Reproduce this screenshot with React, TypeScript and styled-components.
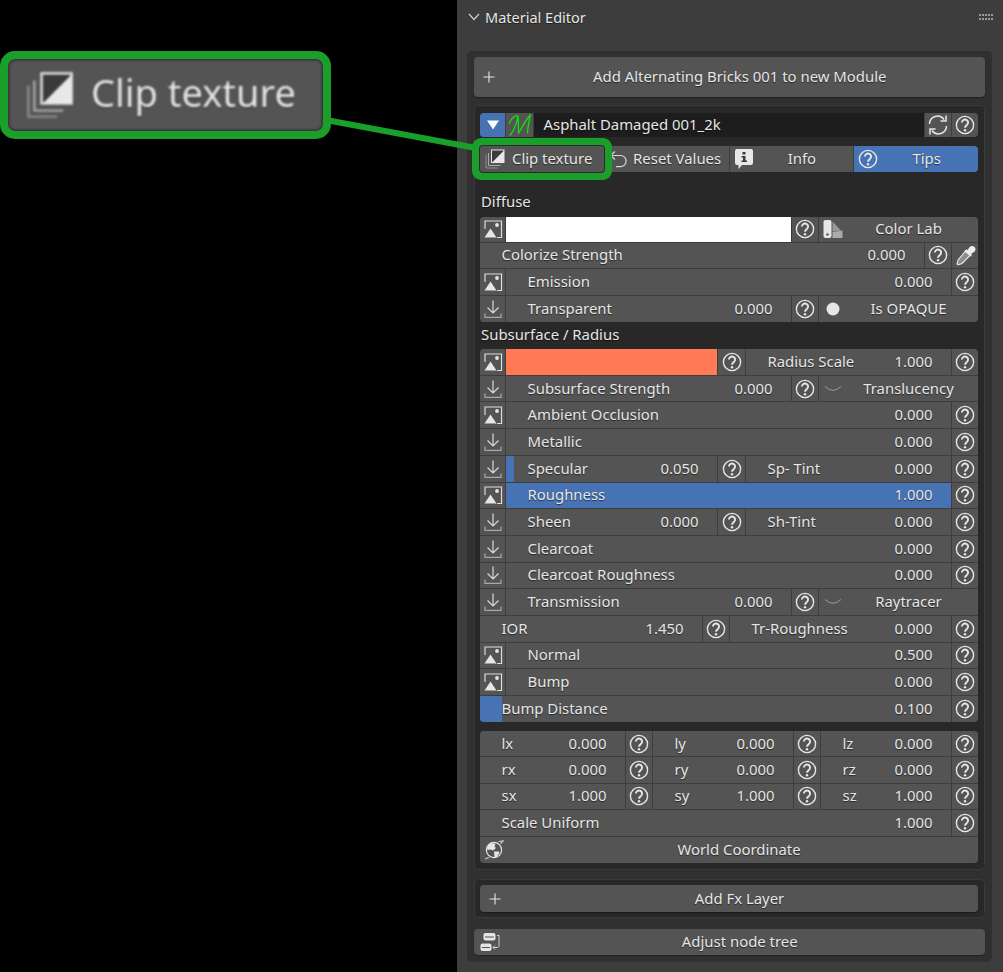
import React, { FC } from "react";
import styled, { createGlobalStyle } from "styled-components";

const GREEN = "#1a9f2b";
const TEXT = "#e6e6e6";
const WIDGET = "#545454";
const LINE = "#3d3d3d";
const BLUE = "#4772b3";

const GlobalStyle = createGlobalStyle`
  html, body { margin: 0; padding: 0; background: #000; }
  #root { width: 1003px; height: 972px; overflow: hidden; }
`;

const Page = styled.div`
  position: relative;
  display: flex;
  width: 1003px;
  height: 972px;
  background: #000;
  font-family: "Noto Sans", "DejaVu Sans", sans-serif;
  font-size: 14.9px;
  color: ${TEXT};
  text-shadow: 0 1px 1px rgba(0, 0, 0, 0.55);
`;

const LeftPane = styled.div`
  width: 457px;
  flex: none;
  padding-top: 51px;
  box-sizing: border-box;
`;

const CalloutRing = styled.div`
  width: 331px;
  height: 88px;
  box-sizing: border-box;
  border: 8px solid ${GREEN};
  border-radius: 15px;
  background: ${WIDGET};
  box-shadow: inset 0 0 3px 1px #2a2a2a;
`;

const CalloutContent = styled.div`
  height: 100%;
  display: flex;
  align-items: center;
  padding: 0 0 7px 18px;
  box-sizing: border-box;
  gap: 17px;
  filter: blur(0.8px);
  font-size: 38px;
  svg { width: 48px; height: 48px; margin-top: 7px; }
`;

const ConnectorSvg = styled.svg`
  position: absolute;
  left: 320px;
  top: 112px;
  z-index: 3;
`;

const Panel = styled.div`
  flex: 1;
  background: #3d3d3d;
  display: flex;
  flex-direction: column;
  padding-left: 10px;
`;

const PanelHeader = styled.div`
  height: 51px;
  width: 526px;
  display: flex;
  align-items: center;
  gap: 4px;
  padding-bottom: 17px;
  box-sizing: border-box;
`;

const PanelTitle = styled.span`
  flex: 1;
  font-size: 14.5px;
`;

const OuterBox = styled.div`
  width: 524.5px;
  height: 910.5px;
  box-sizing: border-box;
  background: #303030;
  border-radius: 5px;
  padding: 6px 6.5px;
  display: flex;
  flex-direction: column;
`;

const BigButton = styled.div<{ $h: number; $top?: number; $iconLeft?: number }>`
  position: relative;
  height: ${(p) => p.$h}px;
  margin-top: ${(p) => p.$top || 0}px;
  flex: none;
  box-sizing: border-box;
  padding: 0 0 2px 21px;
  background: ${WIDGET};
  border-radius: 4px;
  display: flex;
  align-items: center;
  justify-content: center;
  box-shadow: 0 1px 1px rgba(0, 0, 0, 0.35);
  svg { position: absolute; left: ${(p) => p.$iconLeft ?? 8}px; margin-top: 2px; }
`;

const SubBox = styled.div<{ $top: number }>`
  margin-top: ${(p) => p.$top}px;
  background: #282828;
  border: 1px solid #3a3a3a;
  border-radius: 5px;
  padding: 6.5px 6px 6.5px 5.5px;
  display: flex;
  flex-direction: column;
`;

const FxBox = styled(SubBox)`
  padding-top: 5px;
  padding-bottom: 5px;
`;

const HeadRow = styled.div`
  height: 24.5px;
  display: flex;
  gap: 1px;
  background: ${LINE};
  border-radius: 4px;
`;

const HeadButton = styled.div<{ $w: number; $blue?: boolean }>`
  width: ${(p) => p.$w}px;
  flex: none;
  display: flex;
  align-items: center;
  justify-content: center;
  background: ${(p) => (p.$blue ? BLUE : WIDGET)};
  &:first-child { border-radius: 4px 0 0 4px; }
  &:last-child { border-radius: 0 4px 4px 0; }
`;

const NameField = styled.div`
  flex: 1;
  background: #1d1d1d;
  display: flex;
  align-items: center;
  padding: 0 0 2px 9.5px;
`;

const TabRow = styled.div`
  margin-top: 9px;
  height: 26px;
  display: grid;
  grid-template-columns: repeat(4, 1fr);
  gap: 1px;
  background: ${LINE};
  border-radius: 4px;
`;

const Tab = styled.div<{ $blue?: boolean }>`
  display: flex;
  align-items: center;
  padding: 0 6px 0 4px;
  gap: 3px;
  background: ${(p) => (p.$blue ? BLUE : WIDGET)};
  &:last-child { border-radius: 0 4px 4px 0; }
`;

const TabLabel = styled.span`
  flex: 1;
  text-align: center;
  white-space: nowrap;
  margin-top: -2px;
`;

const ClipTab = styled.div`
  position: relative;
  z-index: 2;
  display: flex;
  align-items: center;
  gap: 7px;
  padding-left: 5px;
  background: ${WIDGET};
  border-radius: 3px;
  white-space: nowrap;
  box-shadow: 0 0 0 1px #2b2b2b, 0 0 0 8px ${GREEN};
`;

const ClipLabel = styled.span`
  margin-top: -2px;
`;

const SectionLabel = styled.div<{ $top?: number }>`
  height: 25px;
  margin-top: ${(p) => p.$top || 0}px;
  margin-bottom: 2px;
  padding-left: 1px;
  line-height: 25px;
`;

const Group = styled.div<{ $top?: number }>`
  margin-top: ${(p) => p.$top || 0}px;
  display: flex;
  flex-direction: column;
  gap: 1px;
  background: ${LINE};
  border-radius: 4px;
  overflow: hidden;
`;

const Row = styled.div<{ $cols: string; $h?: number }>`
  display: grid;
  grid-template-columns: ${(p) => p.$cols};
  gap: 1px;
  height: ${(p) => p.$h || 25.7}px;
`;

const IconCell = styled.div`
  background: ${WIDGET};
  display: flex;
  align-items: center;
  justify-content: center;
`;

const Field = styled.div<{ $fill?: number }>`
  display: flex;
  align-items: center;
  justify-content: space-between;
  padding: 0 18.5px 2px 21.5px;
  min-width: 0;
  white-space: nowrap;
  background: ${(p) =>
    p.$fill
      ? `linear-gradient(90deg, ${BLUE} ${p.$fill}px, ${WIDGET} ${p.$fill}px)`
      : WIDGET};
`;

const Swatch = styled.div<{ $color: string }>`
  background: ${(p) => p.$color};
`;

const Action = styled.div`
  background: ${WIDGET};
  display: flex;
  align-items: center;
  padding: 0 4px;
  min-width: 0;
`;

const ActionIcon = styled.span`
  width: 20px;
  flex: none;
  display: flex;
  align-items: center;
  justify-content: center;
`;

const ActionLabel = styled.span`
  flex: 1;
  text-align: center;
  white-space: nowrap;
  margin-top: -2px;
`;

const Help: FC<{ size?: number }> = ({ size = 20 }) => (
  <svg width={size} height={size} viewBox="0 0 20 20" fill="none" stroke={TEXT}>
    <circle cx="10" cy="10" r="8.6" strokeWidth="1.4" />
    <path
      d="M6.9 7.6a3.1 3.1 0 1 1 4.9 2.5c-1.1.8-1.8 1.3-1.8 2.6"
      strokeWidth="1.9"
    />
    <circle cx="10" cy="15.2" r="1.2" fill={TEXT} stroke="none" />
  </svg>
);

const ImageIcon: FC = () => (
  <svg width="20" height="20" viewBox="0 0 20 20" fill="none">
    <path d="M5 2H18.5V18.5H14M2 10V2H5" stroke="#dcdcdc" strokeWidth="1.2" />
    <path d="M1.5 18.5L7.5 9.5L13.5 18.5Z" fill="#e6e6e6" />
    <circle cx="14" cy="6" r="1.9" fill="#e6e6e6" />
  </svg>
);

const ImportIcon: FC = () => (
  <svg width="20" height="20" viewBox="0 0 20 20" fill="none" stroke="#d8d8d8" strokeWidth="1.2">
    <path d="M10 1.5V13.5M4.5 8.5L10 14L15.5 8.5" />
    <path d="M2 14.5V18.4H18V14.5" stroke="#a8a8a8" />
  </svg>
);

const RefreshIcon: FC = () => (
  <svg width="22" height="22" viewBox="0 0 22 22" fill="none" stroke={TEXT} strokeWidth="1.5">
    <path d="M2.5 10A8 8 0 0 1 17 5.5M19 1.5V7H13.5" />
    <path d="M19.5 12A8 8 0 0 1 5 16.5M3 20.5V15H8.5" />
  </svg>
);

const InfoIcon: FC = () => (
  <svg width="20" height="22" viewBox="0 0 20 22">
    <path
      d="M3 1H17A2 2 0 0 1 19 3V15A2 2 0 0 1 17 17H8L4.5 21V17H3A2 2 0 0 1 1 15V3A2 2 0 0 1 3 1Z"
      fill="#e8e8e8"
    />
    <path d="M8.5 4H11.5V6.5H8.5ZM7.5 8H11.5V12.5H13V14H7.5V12.5H9V9.5H7.5Z" fill="#3a3a3a" />
  </svg>
);

const ClipIcon: FC = () => (
  <svg width="20" height="20" viewBox="0 0 20 20" fill="none">
    <path d="M1 6V19H13" stroke="#8d8d8d" strokeWidth="1" />
    <path d="M3.5 4V16.5H15.5" stroke="#a8a8a8" strokeWidth="1" />
    <rect x="6.5" y="1" width="12.5" height="12.5" fill="#3a3a3a" stroke="#e6e6e6" strokeWidth="1" />
    <path d="M19 1.5V13.5H7Z" fill="#e8e8e8" />
  </svg>
);

const ResetIcon: FC = () => (
  <svg width="20" height="20" viewBox="0 0 20 20" fill="none" stroke="#d8d8d8" strokeWidth="1.2">
    <path d="M6 2.5L1.5 6.5L6 10.5" />
    <path d="M2 6.5H11.5A5.6 5.6 0 0 1 11.5 17.7H7" />
  </svg>
);

const PaletteIcon: FC = () => (
  <svg width="20" height="20" viewBox="0 0 20 20">
    <path d="M9.5 2.5L18 11.5L9.5 12.5Z" fill="#9a9a9a" />
    <path d="M9.5 13L19.5 11.5V19H9.5Z" fill="#ababab" />
    <rect x="0.5" y="1" width="8" height="18" rx="2" fill="#e6e6e6" />
    <circle cx="4.5" cy="15.5" r="1.2" fill="#545454" />
  </svg>
);

const DropperIcon: FC = () => (
  <svg width="21" height="21" viewBox="0 0 21 21" fill="none">
    <path d="M11.5 5L16 9.5L7 18.5L3 19.8L2 18.8L3.2 14.8Z" fill="#8c8c8c" stroke="#e6e6e6" strokeWidth="1.1" />
    <path d="M10 5L12.2 5.6L14.3 2.4C16 .6 18 .6 19.6 2C21 3.6 20.7 5.6 19 7L15.8 8.9L16.8 11L15.5 11.5L9.3 6.2Z" fill="#ececec" />
  </svg>
);

const GlobeIcon: FC = () => (
  <svg width="20" height="20" viewBox="0 0 20 20" fill="none">
    <circle cx="10" cy="10" r="7.6" stroke="#e6e6e6" strokeWidth="1.2" />
    <path
      d="M5 4.5C7 3 10 3 11.5 4L10.5 6.5L12 8L9 10.5L6.5 9.5L3.5 10C3 8 3.5 6 5 4.5ZM10 11.5L15 11.5L15.5 13L12.5 17L10.5 17Z"
      fill="#e6e6e6"
    />
    <path d="M14.5 1.5L19 1L16.5 4M1 19L5 17.5" stroke="#cfcfcf" strokeWidth="1.1" />
  </svg>
);

const NodeIcon: FC = () => (
  <svg width="20" height="20" viewBox="0 0 20 20" fill="none">
    <rect x="3.5" y="1" width="12" height="7.5" rx="2" fill="#e6e6e6" />
    <rect x="0.5" y="11.5" width="11" height="7.5" rx="2" fill="#e6e6e6" />
    <path d="M5 5H14" stroke="#545454" strokeWidth="1" />
    <path d="M2 15.5H10" stroke="#545454" strokeWidth="1" />
    <path d="M17 3.5H19V13.5C19 15 18 15.5 17 15.5H13M15 13.5L13 15.5L15 17.5" stroke="#d0d0d0" strokeWidth="1" />
  </svg>
);

const PlusIcon: FC = () => (
  <svg width="14" height="14" viewBox="0 0 14 14" stroke={TEXT} strokeWidth="1.1">
    <path d="M7 1.5V12.5M1.5 7H12.5" />
  </svg>
);

const ArcIcon: FC = () => (
  <svg width="18" height="10" viewBox="0 0 18 10" fill="none" stroke="#9a9a9a" strokeWidth="1">
    <path d="M1 2.5Q9 10 17 2.5" />
  </svg>
);

const DotIcon: FC = () => (
  <svg width="14" height="14" viewBox="0 0 14 14">
    <circle cx="7" cy="7" r="6.5" fill="#e6e6e6" />
  </svg>
);

const ChevronIcon: FC = () => (
  <svg width="14" height="10" viewBox="0 0 14 10" fill="none" stroke="#cfcfcf" strokeWidth="1.2">
    <path d="M2 2L7 7.5L12 2" />
  </svg>
);

const GripIcon: FC = () => (
  <svg width="14" height="6" viewBox="0 0 14 6" fill="#9a9a9a">
    {[0, 3, 6, 9, 12].map((x) => (
      <React.Fragment key={x}>
        <rect x={x} y="0" width="2" height="2" />
        <rect x={x} y="4" width="2" height="2" />
      </React.Fragment>
    ))}
  </svg>
);

const MaterialLogo: FC = () => (
  <svg width="27" height="24" viewBox="0 0 27 24" fill="none" stroke="#10e010" strokeWidth="1.3">
    <path d="M4 22.5C8 17 11 9 12 3C12.5 9 12.5 15 12.5 20.5C16 14 20 7 24.5 1.5C23 8 21.5 15 21.5 20.5" />
    <path d="M3.3 11C4.5 6 8 2.5 12 3" />
  </svg>
);

const Triangle: FC = () => (
  <svg width="12" height="10" viewBox="0 0 12 10">
    <path d="M0 .5H12L6 9.5Z" fill="#fff" />
  </svg>
);

const HelpCell: FC = () => (
  <IconCell>
    <Help />
  </IconCell>
);

const ICONS: Record<string, FC> = { image: ImageIcon, import: ImportIcon };

const ROWS = {
  wide: "25px 1fr 26px",
  split: "25px 285px 26px 1fr",
  slider: "25px 211px 27px 1fr 26px",
  ior: "1fr 26px 221px 26px",
  plain: "1fr 26px",
  xyz: "145px 26px 140px 26px 1fr 26px",
};

interface IWideRow {
  icon: string;
  label: string;
  value: string;
}

const WideRow: FC<IWideRow> = ({ icon, label, value }) => {
  const Icon = ICONS[icon];
  return (
    <Row $cols={ROWS.wide}>
      <IconCell>
        <Icon />
      </IconCell>
      <Field>
        <span>{label}</span>
        <span>{value}</span>
      </Field>
      <HelpCell />
    </Row>
  );
};

interface ISplitRow {
  label: string;
  value: string;
  action: string;
  actionIcon: React.ReactNode;
}

const SplitRow: FC<ISplitRow> = ({ label, value, action, actionIcon }) => (
  <Row $cols={ROWS.split}>
    <IconCell>
      <ImportIcon />
    </IconCell>
    <Field>
      <span>{label}</span>
      <span>{value}</span>
    </Field>
    <HelpCell />
    <Action>
      <ActionIcon>{actionIcon}</ActionIcon>
      <ActionLabel>{action}</ActionLabel>
    </Action>
  </Row>
);

interface ISliderRow {
  label: string;
  value: string;
  fill?: number;
  sub: string;
  subValue: string;
}

const SliderRow: FC<ISliderRow> = ({ label, value, fill, sub, subValue }) => (
  <Row $cols={ROWS.slider}>
    <IconCell>
      <ImportIcon />
    </IconCell>
    <Field $fill={fill}>
      <span>{label}</span>
      <span>{value}</span>
    </Field>
    <HelpCell />
    <Field>
      <span>{sub}</span>
      <span>{subValue}</span>
    </Field>
    <HelpCell />
  </Row>
);

const XYZ_ROWS = [
  [["lx", "0.000"], ["ly", "0.000"], ["lz", "0.000"]],
  [["rx", "0.000"], ["ry", "0.000"], ["rz", "0.000"]],
  [["sx", "1.000"], ["sy", "1.000"], ["sz", "1.000"]],
];

const App: FC = () => {
  return (
    <Page>
      <GlobalStyle />
      <LeftPane>
        <CalloutRing>
          <CalloutContent>
            <ClipIcon />
            <span>Clip texture</span>
          </CalloutContent>
        </CalloutRing>
      </LeftPane>
      <ConnectorSvg width="160" height="44" viewBox="0 0 160 44">
        <path d="M6 8L156 36" stroke={GREEN} strokeWidth="6" />
      </ConnectorSvg>

      <Panel>
        <PanelHeader>
          <ChevronIcon />
          <PanelTitle>Material Editor</PanelTitle>
          <GripIcon />
        </PanelHeader>
        <OuterBox>
          <BigButton $h={39.5}>
            <PlusIcon />
            Add Alternating Bricks 001 to new Module
          </BigButton>

          <SubBox $top={8.5}>
            <HeadRow>
              <HeadButton $w={25} $blue>
                <Triangle />
              </HeadButton>
              <HeadButton $w={27}>
                <MaterialLogo />
              </HeadButton>
              <NameField>Asphalt Damaged 001_2k</NameField>
              <HeadButton $w={26}>
                <RefreshIcon />
              </HeadButton>
              <HeadButton $w={26}>
                <Help />
              </HeadButton>
            </HeadRow>

            <TabRow>
              <ClipTab>
                <ClipIcon />
                <ClipLabel>Clip texture</ClipLabel>
              </ClipTab>
              <Tab>
                <ResetIcon />
                <TabLabel>Reset Values</TabLabel>
              </Tab>
              <Tab>
                <InfoIcon />
                <TabLabel>Info</TabLabel>
              </Tab>
              <Tab $blue>
                <Help />
                <TabLabel>Tips</TabLabel>
              </Tab>
            </TabRow>

            <SectionLabel $top={16.5}>Diffuse</SectionLabel>
            <Group $top={1}>
              <Row $cols={ROWS.split} $h={25}>
                <IconCell>
                  <ImageIcon />
                </IconCell>
                <Swatch $color="#ffffff" />
                <HelpCell />
                <Action>
                  <ActionIcon>
                    <PaletteIcon />
                  </ActionIcon>
                  <ActionLabel>Color Lab</ActionLabel>
                </Action>
              </Row>
              <Row $cols="1fr 26px 26px">
                <Field>
                  <span>Colorize Strength</span>
                  <span>0.000</span>
                </Field>
                <HelpCell />
                <IconCell>
                  <DropperIcon />
                </IconCell>
              </Row>
              <WideRow icon="image" label="Emission" value="0.000" />
              <SplitRow label="Transparent" value="0.000" action="Is OPAQUE" actionIcon={<DotIcon />} />
            </Group>

            <SectionLabel>Subsurface / Radius</SectionLabel>
            <Group $top={0.5}>
              <Row $cols={ROWS.slider}>
                <IconCell>
                  <ImageIcon />
                </IconCell>
                <Swatch $color="#ff7a55" />
                <HelpCell />
                <Field>
                  <span>Radius Scale</span>
                  <span>1.000</span>
                </Field>
                <HelpCell />
              </Row>
              <SplitRow label="Subsurface Strength" value="0.000" action="Translucency" actionIcon={<ArcIcon />} />
              <WideRow icon="image" label="Ambient Occlusion" value="0.000" />
              <WideRow icon="import" label="Metallic" value="0.000" />
              <SliderRow label="Specular" value="0.050" fill={8} sub="Sp- Tint" subValue="0.000" />
              <Row $cols={ROWS.wide}>
                <IconCell>
                  <ImageIcon />
                </IconCell>
                <Field $fill={446}>
                  <span>Roughness</span>
                  <span>1.000</span>
                </Field>
                <HelpCell />
              </Row>
              <SliderRow label="Sheen" value="0.000" sub="Sh-Tint" subValue="0.000" />
              <WideRow icon="import" label="Clearcoat" value="0.000" />
              <WideRow icon="import" label="Clearcoat Roughness" value="0.000" />
              <SplitRow label="Transmission" value="0.000" action="Raytracer" actionIcon={<ArcIcon />} />
              <Row $cols={ROWS.ior}>
                <Field>
                  <span>IOR</span>
                  <span>1.450</span>
                </Field>
                <HelpCell />
                <Field>
                  <span>Tr-Roughness</span>
                  <span>0.000</span>
                </Field>
                <HelpCell />
              </Row>
              <WideRow icon="image" label="Normal" value="0.500" />
              <WideRow icon="image" label="Bump" value="0.000" />
              <Row $cols={ROWS.plain}>
                <Field $fill={22}>
                  <span>Bump Distance</span>
                  <span>0.100</span>
                </Field>
                <HelpCell />
              </Row>
            </Group>

            <Group $top={9.7}>
              {XYZ_ROWS.map((cells, rowIndex) => (
                <Row $cols={ROWS.xyz} $h={rowIndex === 0 ? 24.5 : undefined} key={rowIndex}>
                  {cells.map(([label, value]) => (
                    <React.Fragment key={label}>
                      <Field>
                        <span>{label}</span>
                        <span>{value}</span>
                      </Field>
                      <HelpCell />
                    </React.Fragment>
                  ))}
                </Row>
              ))}
              <Row $cols={ROWS.plain}>
                <Field>
                  <span>Scale Uniform</span>
                  <span>1.000</span>
                </Field>
                <HelpCell />
              </Row>
              <Row $cols="1fr">
                <Action>
                  <ActionIcon>
                    <GlobeIcon />
                  </ActionIcon>
                  <ActionLabel>World Coordinate</ActionLabel>
                </Action>
              </Row>
            </Group>
          </SubBox>

          <FxBox $top={9.2}>
            <BigButton $h={26.7}>
              <PlusIcon />
              Add Fx Layer
            </BigButton>
          </FxBox>

          <BigButton $h={26} $top={10.7} $iconLeft={6}>
            <NodeIcon />
            Adjust node tree
          </BigButton>
        </OuterBox>
      </Panel>
    </Page>
  );
};

export default App;
